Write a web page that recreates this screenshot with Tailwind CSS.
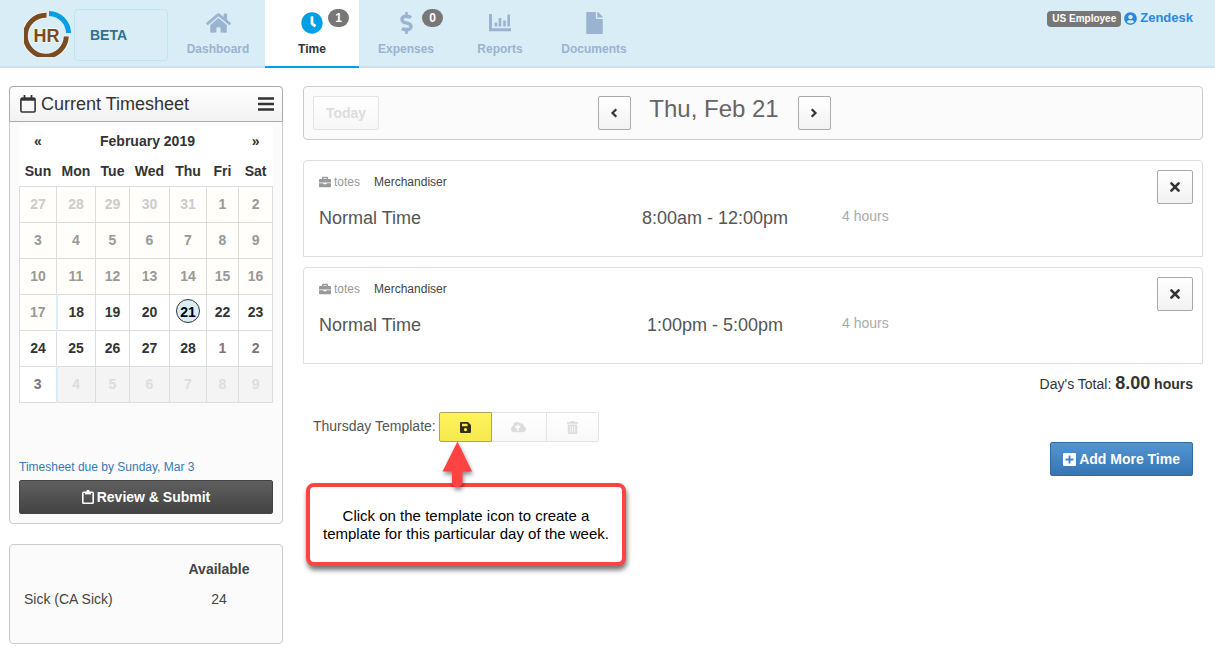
<!DOCTYPE html>
<html lang="en">
<head>
<meta charset="utf-8">
<title>Timesheet</title>
<script src="https://cdn.jsdelivr.net/npm/@tailwindcss/browser@4"></script>
</head>
<body class="bg-white font-['Liberation_Sans',Arial,sans-serif] text-sm text-[#333]">
<svg class="hidden">
  <symbol id="times" viewBox="0 0 12 12"><path d="M2.400 2.400l7.200 7.200M9.600 2.400l-7.200 7.200" stroke="currentColor" stroke-width="2.600" fill="none" stroke-linecap="round"/></symbol>
  <symbol id="briefcase" viewBox="0 0 512 512"><path fill="currentColor" d="M320 336c0 8.800-7.200 16-16 16h-96c-8.800 0-16-7.200-16-16v-32H0v128c0 25.600 22.400 48 48 48h416c25.600 0 48-22.400 48-48V304H320v32zm144-208h-80V80c0-25.600-22.400-48-48-48H176c-25.600 0-48 22.400-48 48v48H48c-25.600 0-48 22.400-48 48v104h512V176c0-25.600-22.400-48-48-48zm-144 0H192V96h128v32z"/></symbol>
</svg>

<header class="flex h-[68px] border-b-2 border-[#d0e0ea] bg-[#d9edf7]">
  <a href="#" class="ml-6 mt-[9px] block size-12 shrink-0" aria-label="HR">
    <svg class="size-12" viewBox="0 0 48 48" fill="none">
      <path d="M22.500 6.200A20.500 20.500 0 1 0 42.300 27.500" stroke="#fff" stroke-width="7" opacity=".5"/>
      <path d="M22.500 6.200A20.500 20.500 0 1 0 42.300 27.500" stroke="#7a4b21" stroke-width="5"/>
      <path d="M25 4.500A20 20 0 0 1 44.500 24" stroke="#009fe3" stroke-width="5"/>
      <text x="22.500" y="33" text-anchor="middle" font-family="Liberation Sans" font-weight="700" font-size="18" fill="#7a4b21" stroke="#fff" stroke-width="2" stroke-opacity=".5" paint-order="stroke">HR</text>
    </svg>
  </a>
  <div class="ml-0.5 mt-[9px] flex h-[52px] w-[94px] shrink-0 items-center rounded border border-[#bce8f1] pl-[15px] font-bold text-[#31708f]">BETA</div>
  <nav class="ml-[3px] flex text-xs font-bold text-[#9ab3d0]">
    <a href="#" class="flex h-[68px] w-[94px] flex-col items-center pt-3">
      <svg class="h-[22px] w-[25px]" viewBox="0 0 576 512" fill="currentColor"><path d="M280.370 148.260L96 300.110V464a16 16 0 0 0 16 16l112.060-.290a16 16 0 0 0 15.920-16V368a16 16 0 0 1 16-16h64a16 16 0 0 1 16 16v95.640a16 16 0 0 0 16 16.050L464 480a16 16 0 0 0 16-16V300L295.670 148.260a12.190 12.190 0 0 0-15.300 0zM571.600 251.470L488 182.560V44.050a12 12 0 0 0-12-12h-56a12 12 0 0 0-12 12v72.610L318.470 43a48 48 0 0 0-61 0L4.340 251.470a12 12 0 0 0-1.600 16.900l25.500 31A12 12 0 0 0 45.150 301l235.220-193.740a12.190 12.190 0 0 1 15.300 0L530.900 301a12 12 0 0 0 16.900-1.600l25.500-31a12 12 0 0 0-1.700-16.930z"/></svg>
      <span class="mt-[7px] leading-4">Dashboard</span>
    </a>
    <a href="#" class="relative flex h-[68px] w-[94px] flex-col items-center border-b-2 border-[#009fe3] bg-white pt-3 text-[#333]">
      <svg class="size-[22px] text-[#009fe3]" viewBox="0 0 512 512" fill="currentColor"><path d="M256 8C119 8 8 119 8 256s111 248 248 248 248-111 248-248S393 8 256 8zm92.490 313l-20 25a16 16 0 0 1-22.490 2.500l-67-49.720a40 40 0 0 1-15-31.230V112a16 16 0 0 1 16-16h32a16 16 0 0 1 16 16v144l58 42.500a16 16 0 0 1 2.490 22.500z"/></svg>
      <span class="mt-[7px] leading-4">Time</span>
      <span class="absolute left-[63px] top-[9px] h-[18px] w-[21px] rounded-full bg-[#777] text-center leading-[18px] text-white">1</span>
    </a>
    <a href="#" class="relative flex h-[68px] w-[94px] flex-col items-center pt-3">
      <svg class="h-[22px] w-[13px]" viewBox="0 0 288 512" fill="currentColor"><path d="M209.200 233.400l-108-31.600C88.700 198.200 80 186.500 80 173.500c0-16.300 13.200-29.500 29.500-29.500h66.300c12.200 0 24.200 3.700 34.200 10.500 6.100 4.100 14.300 3.100 19.500-2l34.800-34c7.100-6.900 6.100-18.400-1.800-24.500C238 74.800 207.400 64.100 176 64V16c0-8.800-7.200-16-16-16h-32c-8.800 0-16 7.200-16 16v48h-2.500C45.800 64-5.400 118.700.5 183.600c4.200 46.100 39.400 83.600 83.800 96.600l102.500 30c12.500 3.700 21.200 15.300 21.200 28.300 0 16.300-13.200 29.500-29.500 29.500h-66.300C100 368 88 364.300 78 357.500c-6.100-4.100-14.300-3.100-19.500 2l-34.800 34c-7.100 6.900-6.100 18.400 1.800 24.500 24.500 19.200 55.100 29.900 86.500 30v48c0 8.800 7.200 16 16 16h32c8.800 0 16-7.200 16-16v-48.200c46.600-.9 90.300-28.600 105.700-72.700 21.500-61.600-14.600-124.800-72.500-141.700z"/></svg>
      <span class="mt-[7px] leading-4">Expenses</span>
      <span class="absolute left-[63px] top-[9px] h-[18px] w-[21px] rounded-full bg-[#777] text-center leading-[18px] text-white">0</span>
    </a>
    <a href="#" class="flex h-[68px] w-[94px] flex-col items-center pt-3">
      <svg class="size-[22px]" viewBox="0 0 22 22" fill="none" stroke="currentColor"><path d="M1.500 2v15.700H22" stroke-width="3"/><path d="M7 10.500v4M11 6v8.500M15.500 8.500v6M19.700 2.500v12" stroke-width="2.600"/></svg>
      <span class="mt-[7px] leading-4">Reports</span>
    </a>
    <a href="#" class="flex h-[68px] w-[94px] flex-col items-center pt-3">
      <svg class="h-[22px] w-[17px]" viewBox="0 0 384 512" fill="currentColor"><path d="M224 136V0H24C10.700 0 0 10.700 0 24v464c0 13.300 10.700 24 24 24h336c13.300 0 24-10.700 24-24V160H248c-13.200 0-24-10.800-24-24zm160-14.100v6.100H256V0h6.100c6.400 0 12.500 2.500 17 7l97.900 98c4.500 4.500 7 10.600 7 16.900z"/></svg>
      <span class="mt-[7px] leading-4">Documents</span>
    </a>
  </nav>
  <div class="ml-auto mr-[22px] mt-[9px] flex h-[18px] items-center font-bold">
    <span class="mt-px h-4 rounded-sm bg-[#777] px-[5px] text-[10px] leading-4 text-white">US Employee</span>
    <a href="#" class="ml-[3px] flex items-center gap-[3px] text-[13px] leading-4 text-[#2a86e0]">
      <svg class="size-[13px]" viewBox="0 0 496 512" fill="currentColor"><path d="M248 8C111 8 0 119 0 256s111 248 248 248 248-111 248-248S385 8 248 8zm0 96c48.600 0 88 39.400 88 88s-39.400 88-88 88-88-39.400-88-88 39.400-88 88-88zm0 344c-58.700 0-111.300-26.600-146.500-68.200 18.800-35.400 55.600-59.800 98.500-59.800 2.400 0 4.800.4 7.100 1.100 13 4.200 26.600 6.900 40.900 6.900 14.300 0 28-2.700 40.900-6.900 2.300-.7 4.700-1.100 7.100-1.100 42.900 0 79.700 24.400 98.500 59.800C359.300 421.400 306.700 448 248 448z"/></svg>Zendesk</a>
  </div>
</header>

<div class="flex gap-5 pl-[9px] pr-3 pt-[18px]">
  <aside class="w-[274px] shrink-0">
    <section class="rounded border border-[#ccc] bg-[#fbfbfb] pb-[9px]">
      <div class="-mx-px -mt-px flex h-9 items-center rounded-t border border-[#aaa] bg-linear-to-b from-white to-[#f2f2f2] pl-[10px] pr-2">
        <svg class="h-[18px] w-4" viewBox="0 0 16 18" fill="none" stroke="currentColor"><rect x=".9" y="3.400" width="14.200" height="13.600" rx="1.200" stroke-width="1.600"/><path d="M1 4.200h14" stroke-width="3"/><path d="M4.500 0v4M11.500 0v4" stroke-width="1.800"/></svg>
        <h2 class="ml-[5px] text-lg leading-6">Current Timesheet</h2>
        <button class="ml-auto" aria-label="Menu"><svg class="block h-[14px] w-4" viewBox="0 0 16 14" stroke="currentColor" stroke-width="2.400"><path d="M0 1.500h16M0 7h16M0 12.500h16"/></svg></button>
      </div>
      <div class="mt-1 px-[9px]">
        <table class="w-full table-fixed border-collapse bg-white text-center font-bold leading-5 [&_td]:border [&_td]:border-[#ddd] [&_tbody_tr]:h-9">
          <colgroup><col class="w-[37px]"><col class="w-[39px]"><col class="w-[34px]"><col class="w-[40px]"><col class="w-[37px]"><col class="w-[32px]"><col class="w-[34px]"></colgroup>
          <thead>
            <tr class="h-[30px]"><th><button aria-label="Previous month">«</button></th><th colspan="5">February 2019</th><th><button aria-label="Next month">»</button></th></tr>
            <tr class="h-[30px]"><th>Sun</th><th>Mon</th><th>Tue</th><th>Wed</th><th>Thu</th><th>Fri</th><th>Sat</th></tr>
          </thead>
          <tbody>
            <tr class="bg-[#fffefa] text-[#ccc]"><td>27</td><td>28</td><td>29</td><td>30</td><td>31</td><td class="text-[#999]">1</td><td class="text-[#999]">2</td></tr>
            <tr class="bg-[#fffefa] text-[#999]"><td>3</td><td>4</td><td>5</td><td>6</td><td>7</td><td>8</td><td>9</td></tr>
            <tr class="bg-[#fffefa] text-[#999]"><td>10</td><td>11</td><td>12</td><td>13</td><td>14</td><td>15</td><td>16</td></tr>
            <tr><td class="border-r-2! border-r-[#d9edf7]! bg-[#fffefa] text-[#999]">17</td><td>18</td><td>19</td><td>20</td><td><span class="mx-auto mb-0.5 block size-6 rounded-full border border-[#333] bg-[#d9edf7] leading-6 text-black">21</span></td><td>22</td><td>23</td></tr>
            <tr><td>24</td><td>25</td><td>26</td><td>27</td><td>28</td><td class="text-[#777]">1</td><td class="text-[#777]">2</td></tr>
            <tr class="bg-[#f4f4f4] text-[#ddd]"><td class="border-r-2! border-r-[#d9edf7]! bg-white text-[#777]">3</td><td>4</td><td>5</td><td>6</td><td>7</td><td>8</td><td>9</td></tr>
          </tbody>
        </table>
        <a href="#" class="mt-14 block text-xs leading-4 text-[#337ab7]">Timesheet due by Sunday, Mar 3</a>
        <button class="mt-[5px] flex h-[34px] w-full items-center justify-center gap-[3px] rounded-xs border border-[#444] bg-linear-to-b from-[#606060] to-[#434343] font-bold text-white">
          <svg class="h-[14px] w-3" viewBox="0 0 12 14" fill="none" stroke="currentColor"><rect x=".8" y="2.300" width="10.400" height="10.900" rx=".8" stroke-width="1.600"/><path d="M3 3.200h6" stroke-width="2.400"/><path d="M6 0v3" stroke-width="2.800"/></svg>Review &amp; Submit</button>
      </div>
    </section>
    <section class="mt-5 h-[100px] rounded-sm border border-[#ccc] bg-[#fbfbfb] px-[14px] pt-[9px] text-[#444]">
      <table class="w-full table-fixed leading-5">
        <thead><tr class="h-[30px]"><td class="w-[146px]"></td><th>Available</th></tr></thead>
        <tbody><tr class="h-[30px]"><td>Sick (CA Sick)</td><td class="text-center">24</td></tr></tbody>
      </table>
    </section>
  </aside>

  <main class="min-w-0 flex-1">
    <div class="grid h-[54px] grid-cols-[1fr_auto_1fr] items-start rounded-sm border border-[#ccc] bg-[#fbfbfb] px-[9px] pt-[9px]">
      <button disabled class="h-[34px] w-[66px] rounded-xs border border-[#e3e3e3] bg-linear-to-b from-white to-[#f7f7f7] font-bold text-[#ddd]">Today</button>
      <div class="mr-[78px] flex">
        <button aria-label="Previous day" class="flex h-[34px] w-[33px] items-center justify-center rounded-xs border border-[#aaa] bg-linear-to-b from-white to-[#f2f2f2]"><svg class="size-[10px]" viewBox="0 0 10 10" fill="none" stroke="currentColor" stroke-width="2.200"><path d="M7.300 1.300L3.500 5l3.800 3.700"/></svg></button>
        <h1 class="w-[167px] text-center text-2xl leading-[26px] text-[#666]">Thu, Feb 21</h1>
        <button aria-label="Next day" class="flex h-[34px] w-[33px] items-center justify-center rounded-xs border border-[#aaa] bg-linear-to-b from-white to-[#f2f2f2]"><svg class="size-[10px]" viewBox="0 0 10 10" fill="none" stroke="currentColor" stroke-width="2.200"><path d="M2.700 1.300L6.500 5l-3.800 3.700"/></svg></button>
      </div>
    </div>

    <article class="mt-5 flex h-[97px] rounded-t border border-[#ddd] pl-[15px] pr-[9px] pt-[9px]">
      <div class="flex-1">
        <div class="mt-1 flex h-4 items-center text-xs leading-4"><svg class="mr-[3px] size-3 text-[#999]"><use href="#briefcase"/></svg><span class="text-[#999]">totes</span><span class="ml-[14px] text-[#444]">Merchandiser</span></div>
        <div class="mt-4 grid grid-cols-[304px_184px_1fr] text-lg leading-6 text-[#555]"><span>Normal Time</span><span class="text-center">8:00am - 12:00pm</span><span class="pl-[35px] text-sm leading-5 text-[#aaa]">4 hours</span></div>
      </div>
      <button aria-label="Remove entry" class="flex h-[34px] w-9 items-center justify-center rounded-xs border border-[#aaa] bg-linear-to-b from-white to-[#f2f2f2]"><svg class="size-3"><use href="#times"/></svg></button>
    </article>
    <article class="mt-[10px] flex h-[97px] rounded-t border border-[#ddd] pl-[15px] pr-[9px] pt-[9px]">
      <div class="flex-1">
        <div class="mt-1 flex h-4 items-center text-xs leading-4"><svg class="mr-[3px] size-3 text-[#999]"><use href="#briefcase"/></svg><span class="text-[#999]">totes</span><span class="ml-[14px] text-[#444]">Merchandiser</span></div>
        <div class="mt-4 grid grid-cols-[304px_184px_1fr] text-lg leading-6 text-[#555]"><span>Normal Time</span><span class="text-center">1:00pm - 5:00pm</span><span class="pl-[35px] text-sm leading-5 text-[#aaa]">4 hours</span></div>
      </div>
      <button aria-label="Remove entry" class="flex h-[34px] w-9 items-center justify-center rounded-xs border border-[#aaa] bg-linear-to-b from-white to-[#f2f2f2]"><svg class="size-3"><use href="#times"/></svg></button>
    </article>

    <p class="mr-[10px] mt-[7px] text-right leading-6">Day's Total: <strong class="text-lg leading-6">8.00</strong> <strong>hours</strong></p>

    <div class="relative ml-[10px] mt-4 flex h-[30px]">
      <span class="mr-[3px] leading-7 text-[#555]">Thursday Template:</span>
      <div class="flex h-[30px]">
        <button aria-label="Save template" class="flex w-[53px] items-center justify-center rounded-l-xs border border-[#a9a660] bg-linear-to-b from-[#fff35c] to-[#f5e94f]"><svg class="size-[11px]" viewBox="0 0 11 11"><path fill="#333016" fill-rule="evenodd" d="M1 0h7l3 3v7a1 1 0 0 1-1 1H1a1 1 0 0 1-1-1V1a1 1 0 0 1 1-1zM2 1.700v2.600h5.500V1.700zM5.500 6a1.600 1.600 0 1 0 .01 0z"/></svg></button>
        <button disabled aria-label="Load template" class="flex w-[55px] items-center justify-center border-y border-r border-[#e3e3e3] bg-linear-to-b from-white to-[#f8f8f8] text-[#ddd]"><svg class="h-3 w-[15px]" viewBox="0 0 640 512"><path fill="currentColor" d="M537.600 226.600c4.100-10.700 6.400-22.400 6.400-34.600 0-53-43-96-96-96-19.700 0-38.100 6-53.300 16.200C367 64.200 315.300 32 256 32c-88.400 0-160 71.600-160 160 0 2.700.1 5.400.2 8.100C40.200 219.800 0 273.200 0 336c0 79.500 64.500 144 144 144h368c70.700 0 128-57.300 128-128 0-61.900-44-113.600-102.400-125.400zM393.400 288H328v112c0 8.800-7.200 16-16 16h-48c-8.800 0-16-7.200-16-16V288h-65.400c-14.300 0-21.400-17.200-11.300-27.300l105.400-105.400c6.200-6.200 16.400-6.200 22.600 0l105.400 105.400c10.100 10.100 2.900 27.300-11.300 27.300z"/></svg></button>
        <button disabled aria-label="Delete template" class="flex w-[52px] items-center justify-center rounded-r-xs border-y border-r border-[#e3e3e3] bg-linear-to-b from-white to-[#f8f8f8] text-[#ddd]"><svg class="h-[13px] w-[11px]" viewBox="0 0 11 13"><path fill="currentColor" fill-rule="evenodd" d="M0 1h3.300L4 0h3l.7 1H11v1.700H0zM.8 3.500h9.400V12a1 1 0 0 1-1 1H1.800a1 1 0 0 1-1-1zM2.800 5v6.300h.8V5zM5.100 5v6.300h.8V5zM7.400 5v6.300h.8V5z"/></svg></button>
      </div>
      <!-- Help callout pointing at the save button -->
      <div class="absolute -left-[7px] top-[71px] flex h-[83px] w-80 items-center justify-center rounded-lg border-4 border-[#ff4343] bg-white text-center text-[15px] leading-[18px] text-black shadow-[1px_4px_5px_rgba(0,0,0,0.55)]"><p class="whitespace-nowrap">Click on the template icon to create a<br>template for this particular day of the week.</p></div>
      <svg class="absolute left-[124px] top-[26px] h-[56px] w-11 drop-shadow-[1px_3px_2px_rgba(0,0,0,0.45)]" viewBox="0 0 44 56"><path fill="#ff4343" d="M20.500 3.500L35 33.500H25.500V44a5 5 0 0 1-10.500 0V33.500H5.500z"/></svg>
    </div>
    <div class="mr-[10px] flex justify-end">
      <button class="flex h-[34px] items-center gap-[3px] rounded-xs border border-[#2e6da4] bg-linear-to-b from-[#5395d3] to-[#3575b3] px-3 font-bold text-white"><svg class="size-[13px]" viewBox="0 0 13 13"><path fill="currentColor" fill-rule="evenodd" d="M1 0h11a1 1 0 0 1 1 1v11a1 1 0 0 1-1 1H1a1 1 0 0 1-1-1V1a1 1 0 0 1 1-1zM5.600 2.500v3.100H2.500v1.800h3.100v3.100h1.800V7.400h3.100V5.600H7.400V2.500z"/></svg>Add More Time</button>
    </div>
  </main>
</div>
</body>
</html>
